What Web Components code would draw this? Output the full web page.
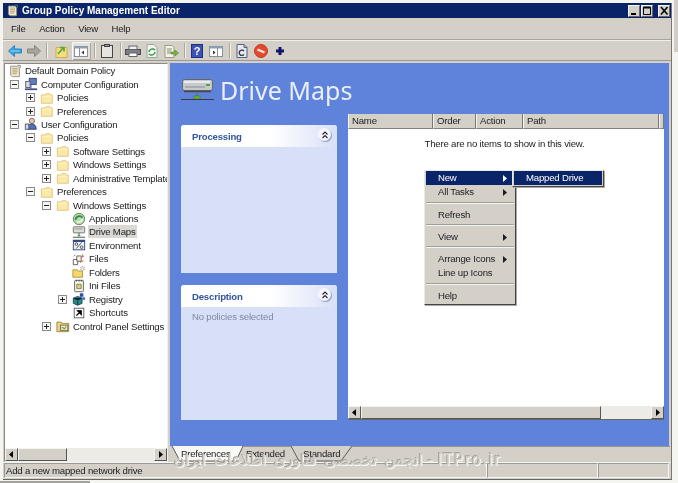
<!DOCTYPE html>
<html>
<head>
<meta charset="utf-8">
<title>Group Policy Management Editor</title>
<style>
html, body { margin: 0; height: 100%; overflow: hidden; }
/* the window behind this one only shows as a strip on the right and a line at the bottom */
body { background:
    linear-gradient(#d0cdc6, #d0cdc6) right 0 top 0 / 4px 52px no-repeat,
    linear-gradient(#a2a19c, #a2a19c) left 0 bottom 0 / 90px 2px no-repeat,
    #f4f4f1;
  font: 9.6px "Liberation Sans", Arial, sans-serif; letter-spacing: -.2px; color: #1c1c20; }
</style>
</head>
<body>
<gp-window>
  <gp-titlebar slot="title">Group Policy Management Editor</gp-titlebar>
  <gp-menubar slot="menu"></gp-menubar>
  <gp-toolbar slot="tools"></gp-toolbar>
  <gp-tree slot="tree"></gp-tree>
  <gp-content slot="content"></gp-content>
  <gp-tabs slot="tabs"></gp-tabs>
  <gp-status slot="status">Add a new mapped network drive</gp-status>
</gp-window>

<script>
// small 16x16 icons, shared by the title bar and the tree
const ICONS = {
  folder: `<path d="M1.500 4.500h4.500l1-1.500h4l1 1.500h2v9.500h-12.500z" fill="#fbe9a8" stroke="#dfc477"/><path d="M2.500 6h10.500" stroke="#fff6cf"/>`,
  doc: `<path d="M3 2.500h8l2 2v10h-8l-2-2z" fill="#f1e8cc" stroke="#8d8a7c"/><path d="M5 5h6M5 7h6M5 9h6M5 11h5" stroke="#a59a78"/><path d="M11 1.500h3v3" fill="none" stroke="#777"/>`,
  computer: `<rect x="6" y="1.500" width="8" height="7" fill="#5c7fc4" stroke="#34406a"/><rect x="2" y="5" width="5" height="7" fill="#d8d8e4" stroke="#50506c"/><path d="M1 14h14" stroke="#40508c" stroke-width="2"/><path d="M8 8.500v5" stroke="#40508c"/>`,
  user: `<circle cx="9" cy="4.500" r="3" fill="#f0c9a0" stroke="#6e6060"/><path d="M4 14c0-4 2-6 5-6s5 2 5 6z" fill="#4f72b8" stroke="#2e3f74"/><rect x="1.500" y="8" width="4" height="6" fill="#d8d8e4" stroke="#50506c"/>`,
  apps: `<circle cx="8" cy="8" r="6.500" fill="#b6dcb0" stroke="#5f7d5e"/><path d="M4 9a4.500 4.500 0 0 1 8-2.500" fill="none" stroke="#2f8a3b" stroke-width="2"/><path d="M12 8a4.500 4.500 0 0 1-6 3" fill="none" stroke="#e8f4e6" stroke-width="2"/>`,
  drive: `<rect x="1.500" y="2" width="13" height="7" rx="1" fill="#dcdcd8" stroke="#6b6b68"/><path d="M3 4.500h9" stroke="#8a8a86"/><path d="M8 9v3" stroke="#555"/><rect x="6.500" y="11" width="3" height="2" fill="#5aa83e"/><path d="M1 14h14" stroke="#444"/>`,
  env: `<rect x="1.500" y="2.500" width="13" height="11" fill="#eef1fa" stroke="#2c3a78"/><path d="M1.500 3.500h13" stroke="#2c3a78" stroke-width="2"/><path d="M5 12l6-7" stroke="#444"/><circle cx="5" cy="7" r="1.500" fill="none" stroke="#444"/><circle cx="11" cy="10.500" r="1.500" fill="none" stroke="#444"/>`,
  files: `<path d="M1.500 8.500h5v6h-5z" fill="#fff" stroke="#555"/><path d="M5.500 4.500h5v6h-5z" fill="#fbf6df" stroke="#555"/><path d="M12 1.500l1.500 4-2 1z" fill="#d8483c"/><path d="M9 12l4-2" stroke="#d8483c"/><path d="M2 5l2-2" stroke="#4a7cc0"/>`,
  folders: `<path d="M1 5.500h5l1 1.500h5v7h-11z" fill="#f6d76c" stroke="#b19135"/><path d="M12 1l.7 2 2-.5-1.300 1.500 1.300 1.500-2-.5-.7 2-.7-2-1.800.5 1.100-1.500-1.100-1.500 1.800.5z" fill="#fff" stroke="#8b8b7c" stroke-width=".5"/>`,
  ini: `<rect x="3" y="1.500" width="10" height="13" rx="1" fill="#f8f8f0" stroke="#555"/><path d="M5.500 6h5v5h-5z" fill="#d9d08a" stroke="#807a45"/><path d="M5 1v2M8 1v2M11 1v2" stroke="#444"/>`,
  registry: `<path d="M1.500 7l5-2 5 2v6l-5 2-5-2z" fill="#2b8a86" stroke="#1a4858"/><path d="M6.500 9v6M1.500 7l5 2 5-2" stroke="#0d3040"/><path d="M9 1.500h4v4h-4z" fill="#2a4fa8"/><path d="M12 6h3v3h-3z" fill="#3b6fd0"/>`,
  shortcut: `<rect x="2.500" y="2.500" width="11" height="11" fill="#fff" stroke="#555"/><path d="M5 11l5-5M6.500 5.500h4v4z" stroke="#000" stroke-width="1.500" fill="#000"/>`,
  cpanel: `<path d="M1 3.500h5l1 1.500h7.500v9.500h-13.500z" fill="#eed28a" stroke="#9c8440"/><rect x="5" y="7" width="8.500" height="6" fill="#eee9c8" stroke="#6e6a4a"/><path d="M6.500 10h2l1 1.500 2-3" fill="none" stroke="#357a38"/>`
};
const svg = (name, size = 16) =>
  `<svg width="${size}" height="${size}" viewBox="0 0 16 16" style="display:block">${ICONS[name]}</svg>`;

const define = (tag, css, html, init) => {
  customElements.define(tag, class extends HTMLElement {
    constructor() {
      super();
      this.attachShadow({ mode: "open" }).innerHTML = `<style>${css}</style>${html}`;
      if (init) init(this.shadowRoot, this);
    }
  });
};

define("gp-window", `
  :host { display: block; box-sizing: border-box; margin: 3px 0 0 3px; width: 669px; height: 477px;
    background: #d4d0c8; border-right: 1px solid #777; border-bottom: 1px solid #666; position: relative; filter: blur(.3px); }
  .frame { display: flex; flex-direction: column; height: 100%; }
  .main { flex: 1; min-height: 0; display: flex; gap: 2px; padding: 2px 2px 0 1px; }
  .right { flex: 1; min-width: 0; display: flex; flex-direction: column; }
  .mark { position: absolute; left: 171px; top: 448px; white-space: nowrap; pointer-events: none;
    font: 15px "DejaVu Sans", sans-serif; letter-spacing: 1.500px; color: #d4d0c8;
    text-shadow: -1px -1px 0 #a5a39b, 1px 1px 0 #f8f8f5; }
  .mark .fa { letter-spacing: 0; word-spacing: 3px; }
`, `
  <div class="frame">
    <slot name="title"></slot>
    <slot name="menu"></slot>
    <slot name="tools"></slot>
    <div class="main">
      <slot name="tree"></slot>
      <div class="right">
        <slot name="content"></slot>
        <slot name="tabs"></slot>
      </div>
    </div>
    <slot name="status"></slot>
  </div>
  <div class="mark" dir="ltr"><span class="fa">انجمن تخصصی فناوری اطلاعات ایران</span> - ITPro.ir</div>
`);

define("gp-titlebar", `
  :host { display: flex; align-items: center; height: 15px; flex: none; background: #0a246a; color: #fff;
    font: bold 10px "Liberation Sans", sans-serif; letter-spacing: 0; padding: 0 1px 0 3px; gap: 3px; }
  .t { flex: 1; }
  .b { width: 12px; height: 12px; background: #d4d0c8; box-sizing: border-box;
    border: 1px solid; border-color: #f4f4f0 #666 #666 #f4f4f0; }
  .b svg { display: block; }
  .g { display: flex; gap: 1px; margin-right: 2px; }
`, `
  ${svg("doc", 13)}
  <span class="t"><slot></slot></span>
  <span class="g">
    <span class="b"><svg width="10" height="10"><path d="M2 8h5" stroke="#000" stroke-width="2"/></svg></span>
    <span class="b"><svg width="10" height="10"><path d="M1.500 1.500h7v7h-7z" fill="none" stroke="#000"/><path d="M1.500 1.500h7" stroke="#000" stroke-width="2"/></svg></span>
  </span>
  <span class="b"><svg width="10" height="10"><path d="M2 1l6.500 7.500M8.500 1l-6.500 7.500" stroke="#000" stroke-width="1.600"/></svg></span>
`);

define("gp-menubar", `
  :host { display: flex; align-items: center; height: 22px; flex: none; padding: 0 0 0 8px; gap: 13.500px;
    border-bottom: 1px solid #a9a69e; box-sizing: border-box; }
`, `<span>File</span><span>Action</span><span>View</span><span>Help</span>`);

define("gp-toolbar", `
  :host { display: flex; align-items: center; height: 21px; flex: none; padding: 0 0 0 2px;
    border-top: 1px solid #f0efea; border-bottom: 1px solid #9c9a92; box-sizing: border-box; }
  .i { width: 19px; height: 16px; display: flex; align-items: center; justify-content: center; }
  .s { width: 1px; height: 15px; background: #a9a69e; margin: 0 3px; box-shadow: 1px 0 #f2f1ec; }
  .s.w { margin: 0 5.500px 0 3px; }
  .on { background: #e4e2dc; box-shadow: inset 1px 1px #f8f8f6, inset -1px -1px #a9a69e; height: 18px; }
`, `
  <span class="i"><svg width="16" height="16" viewBox="0 0 16 16"><path d="M1.500 8l6-5.500v3.500h7v4h-7v3.500z" fill="#38a4e2" stroke="#2a86c6"/><path d="M3.500 8h9" stroke="#9ad6f4"/></svg></span>
  <span class="i"><svg width="16" height="16" viewBox="0 0 16 16"><path d="M14.500 8l-6-5.500v3.500h-7v4h7v3.500z" fill="#a6a69e" stroke="#85857c"/></svg></span>
  <span class="s w"></span>
  <span class="i"><svg width="16" height="16" viewBox="0 0 16 16"><path d="M2 4.500h11v10h-11z" fill="#f6dc7c" stroke="#cfae4c"/><path d="M4 11l5-6M10 8.500v-4h-4" fill="none" stroke="#55a83a" stroke-width="1.600"/></svg></span>
  <span class="i on"><svg width="16" height="16" viewBox="0 0 16 16"><rect x="1.500" y="3.500" width="13" height="10" fill="#fff" stroke="#8a9098"/><path d="M1.500 4.500h13" stroke="#8fa0b6" stroke-width="2"/><path d="M6.500 5v8" stroke="#8a9098"/><path d="M11 7.500l-2.500 2 2.500 2z" fill="#333"/></svg></span>
  <span class="s"></span>
  <span class="i"><svg width="16" height="16" viewBox="0 0 16 16"><rect x="2.500" y="2.500" width="11" height="12" fill="#e6e4de" stroke="#444"/><rect x="5.500" y="1.500" width="5" height="2" fill="#999" stroke="#444"/></svg></span>
  <span class="s"></span>
  <span class="i"><svg width="16" height="16" viewBox="0 0 16 16"><rect x=".5" y="6.500" width="15" height="5" fill="#7e7e86" stroke="#4a4a50"/><rect x="4" y="3" width="8" height="3.500" fill="#eee" stroke="#666"/><rect x="4" y="10" width="8" height="3.500" fill="#fff" stroke="#666"/></svg></span>
  <span class="i"><svg width="16" height="16" viewBox="0 0 16 16"><path d="M3 1.500h7l3 3v10h-10z" fill="#f0f4ee" stroke="#9aa69a"/><path d="M5 9a3.500 3.500 0 0 1 6-2M11 9a3.500 3.500 0 0 1-6 2" fill="none" stroke="#3a9a46" stroke-width="1.500"/></svg></span>
  <span class="i"><svg width="16" height="16" viewBox="0 0 16 16"><path d="M2 2.500h7l2 2v10h-9z" fill="#f4f2e0" stroke="#9a9a84"/><path d="M4 6h5M4 8h4M4 10h4" stroke="#888"/><path d="M8 9h4v-2l3.500 3-3.500 3v-2h-4z" fill="#76b83e" stroke="#4a8a28" stroke-width=".6"/></svg></span>
  <span class="s"></span>
  <span class="i"><svg width="16" height="16" viewBox="0 0 16 16"><rect x="2.500" y="1.500" width="11" height="13" fill="#3a52b4" stroke="#1e2e80"/><text x="8" y="12" font-family="Liberation Sans" font-size="11" font-weight="bold" text-anchor="middle" fill="#fff">?</text></svg></span>
  <span class="i"><svg width="16" height="16" viewBox="0 0 16 16"><rect x="1.500" y="3.500" width="13" height="10" fill="#fff" stroke="#8a9098"/><path d="M1.500 4.500h13" stroke="#8fa0b6" stroke-width="2"/><path d="M9.500 5v8" stroke="#8a9098"/><path d="M5 7.500l2.500 2-2.500 2z" fill="#333"/></svg></span>
  <span class="s"></span>
  <span class="i"><svg width="16" height="16" viewBox="0 0 16 16"><path d="M3 1.500h7l3 3v10h-10z" fill="#e4e8f2" stroke="#5a6078"/><path d="M10 1.500v3h3" fill="none" stroke="#5a6078"/><path d="M10 8a2.700 2.700 0 1 0 0 3.500" fill="none" stroke="#334" stroke-width="1.300"/></svg></span>
  <span class="i"><svg width="16" height="16" viewBox="0 0 16 16"><circle cx="8" cy="8" r="6.500" fill="#e2492f" stroke="#c83a22"/><path d="M4.500 6.500l7 3" stroke="#fbe4de" stroke-width="2.400"/></svg></span>
  <span class="i"><svg width="16" height="16" viewBox="0 0 16 16"><path d="M8 4v8M4 8h8" stroke="#14146e" stroke-width="3"/></svg></span>
`);

// tree data: level, expander (+, - or empty), icon, label
const TREE = [
  [0, "", "doc", "Default Domain Policy"],
  [0, "-", "computer", "Computer Configuration"],
  [1, "+", "folder", "Policies"],
  [1, "+", "folder", "Preferences"],
  [0, "-", "user", "User Configuration"],
  [1, "-", "folder", "Policies"],
  [2, "+", "folder", "Software Settings"],
  [2, "+", "folder", "Windows Settings"],
  [2, "+", "folder", "Administrative Templates"],
  [1, "-", "folder", "Preferences"],
  [2, "-", "folder", "Windows Settings"],
  [3, "", "apps", "Applications"],
  [3, "", "drive", "Drive Maps", true],
  [3, "", "env", "Environment"],
  [3, "", "files", "Files"],
  [3, "", "folders", "Folders"],
  [3, "", "ini", "Ini Files"],
  [3, "+", "registry", "Registry"],
  [3, "", "shortcut", "Shortcuts"],
  [2, "+", "cpanel", "Control Panel Settings"]
];

define("gp-tree-row", `
  :host { display: flex; align-items: center; height: 13.450px; white-space: nowrap; }
  .x { width: 9px; height: 9px; box-sizing: border-box; border: 1px solid #8a8a8a; background: #f6f6f2; flex: none; visibility: hidden; margin-right: 5px; }
  .x svg { display: block; }
  .ic { flex: none; width: 14px; margin-right: 2px; height: 13px; display: flex; align-items: center; justify-content: center; }
  .lb { padding: 0 1px; line-height: 13px; }
  :host([selected]) .lb { background: #d9d8d3; }
`, `<span class="x"></span><span class="ic"></span><span class="lb"></span>`);

define("gp-tree", `
  :host { display: flex; flex-direction: column; width: 164px; flex: none; box-sizing: border-box;
    background: #fff; border: 1px solid; border-color: #8a8880 #eee #eee #8a8880; overflow: hidden; }
  .rows { flex: 1; min-height: 0; overflow: hidden; }
  gp-tree-row { margin-left: var(--in); }
  gp-scrollbar { flex: none; }
`, `<div class="rows"></div><gp-scrollbar thumb-width="49"></gp-scrollbar>`, (root) => {
  const rows = root.querySelector(".rows");
  for (const [level, exp, icon, label, sel] of TREE) {
    const row = document.createElement("gp-tree-row");
    // the first row has no expander column at all
    const top = exp === "" && level === 0;
    row.style.setProperty("--in", (top ? 3 : 5 + level * 16) + "px");
    const s = row.shadowRoot;
    const x = s.querySelector(".x");
    if (exp) {
      x.style.visibility = "visible";
      x.innerHTML = `<svg width="7" height="7"><path d="M1 3.500h5${exp === "+" ? "M3.500 1v5" : ""}" stroke="#222"/></svg>`;
    }
    if (top) x.style.display = "none";
    s.querySelector(".ic").innerHTML = svg(icon, 14);
    s.querySelector(".lb").textContent = label;
    if (sel) row.setAttribute("selected", "");
    rows.append(row);
  }
});

define("gp-scrollbar", `
  :host { display: flex; height: 13px; align-items: stretch; background: #ecebe6; }
  .b { width: 13px; flex: none; box-sizing: border-box; background: #d4d0c8; border: 1px solid;
    border-color: #f4f4f0 #555 #555 #f4f4f0; display: flex; align-items: center; justify-content: center; }
  .track { flex: 1; min-width: 0; display: flex; }
  .thumb { box-sizing: border-box; background: #d4d0c8; border: 1px solid; border-color: #f4f4f0 #555 #555 #f4f4f0; }
`, `
  <span class="b"><svg width="5" height="7"><path d="M4 0v7L0 3.500z" fill="#000"/></svg></span>
  <span class="track"><span class="thumb"></span></span>
  <span class="b"><svg width="5" height="7"><path d="M1 0v7l4-3.500z" fill="#000"/></svg></span>
`, (root, el) => {
  // attributes are read once the parser or the parent has set them
  queueMicrotask(() => {
    root.querySelector(".thumb").style.flex = `0 0 ${el.getAttribute("thumb-width") || 50}px`;
  });
});

define("gp-tasks", `
  :host { display: flex; flex-direction: column; box-sizing: border-box; background: #d8e0f7; border-radius: 3px 3px 0 0; }
  .head { height: 22px; flex: none; display: flex; justify-content: space-between; padding: 0 6px 0 11px;
    background: linear-gradient(90deg, #fff 58%, #d8e0f7); color: #32549c; font-weight: bold; border-radius: 3px 3px 0 0; line-height: 24px; }
  .up { width: 13px; height: 13px; margin-top: 3px; border-radius: 50%; background: #f4f6fc; box-shadow: 1px 1px 1px #8d9ab8; display: flex; align-items: center; justify-content: center; }
  .body { flex: 1; padding: 4px 11px; color: #8288a0; }
`, `
  <div class="head"><span><slot name="title"></slot></span>
    <span class="up"><svg width="8" height="8"><path d="M1.500 3.500l2.500-2.500 2.500 2.500M1.500 7l2.500-2.500 2.500 2.500" fill="none" stroke="#223" stroke-width="1.100"/></svg></span></div>
  <div class="body"><slot></slot></div>
`);

customElements.define("gp-menu", class extends HTMLElement {
  constructor() {
    super();
    this.attachShadow({ mode: "open" }).innerHTML = `<style>
      :host { display: block; box-sizing: border-box; background: #d4d0c8; padding: 0 1px 1px; border: 1px solid;
        border-color: #e8e8e4 #444 #444 #e8e8e4; box-shadow: 1px 1px 0 #aaa; white-space: nowrap; }
      .it { height: 14.300px; line-height: 14.300px; padding: 0 7px 0 12px; display: flex; justify-content: space-between; align-items: center; }
      .it.on { background: #0a246a; color: #fff; }
      .sep { height: 2px; margin: 2px 0 4px; background: #a09e96; border-bottom: 1px solid #f4f4f0; box-sizing: border-box; }
      svg { fill: currentColor; }
    </style>`;
  }
  set items(list) {
    for (const it of list) {
      const d = document.createElement("div");
      if (!it) { d.className = "sep"; this.shadowRoot.append(d); continue; }
      d.className = it[2] ? "it on" : "it";
      d.innerHTML = `<span>${it[0]}</span>` + (it[1] ? `<svg width="4" height="7"><path d="M0 0v7l4-3.500z"/></svg>` : "");
      this.shadowRoot.append(d);
    }
  }
});

define("gp-listview", `
  :host { display: flex; flex-direction: column; background: #fff; box-sizing: border-box; position: relative; border-bottom: 1px solid #666; }
  .cols { display: flex; height: 15px; background: #d4d0c8; flex: none; }
  .cols span { box-sizing: border-box; border-right: 1px solid #777; border-left: 1px solid #f4f4f0; border-bottom: 1px solid #808080; padding-left: 3px; line-height: 14px; }
  .empty { flex: 1; text-align: center; padding-top: 9px; min-height: 0; margin-right: 3px; }
  gp-menu { position: absolute; left: 76px; top: 56px; width: 92px; }
  .sub { left: 164px; width: 92px; }
`, `
  <div class="cols">
    <span style="width:85px">Name</span><span style="width:43px">Order</span><span style="width:47px">Action</span><span style="width:136px">Path</span><span style="flex:1"></span>
  </div>
  <div class="empty">There are no items to show in this view.</div>
  <gp-scrollbar thumb-width="240"></gp-scrollbar>
  <gp-menu id="ctx"></gp-menu>
  <gp-menu class="sub" id="sub"></gp-menu>
`, (root) => {
  root.getElementById("ctx").items = [
    ["New", true, true], ["All Tasks", true], 0, ["Refresh"], 0, ["View", true], 0,
    ["Arrange Icons", true], ["Line up Icons"], 0, ["Help"]
  ];
  root.getElementById("sub").items = [["Mapped Drive", false, true]];
});

define("gp-content", `
  :host { display: flex; flex-direction: column; flex: 1; min-height: 0; background: #5f82da; padding: 0 7px 0 11px; box-sizing: border-box; }
  .title { height: 49px; flex: none; display: flex; align-items: center; gap: 6px; padding-top: 5px; box-sizing: border-box;
    color: #e9effc; font: 25px "Noto Sans", sans-serif; letter-spacing: 0; }
  .cols { flex: 1; min-height: 0; display: grid; grid-template-columns: 156px 1fr; gap: 11px; padding-bottom: 26px; }
  .left { display: grid; grid-template-rows: 148px 135px; row-gap: 12px; padding-top: 13px; }
  gp-listview { margin-top: 2px; }
`, `
  <div class="title">
    <svg width="33" height="24" viewBox="0 0 33 24" style="display:block">
      <rect x="1.500" y="1.500" width="30" height="11" rx="2" fill="#c6cacc" stroke="#63666a"/>
      <path d="M3 4h26" stroke="#f4f6f6" stroke-width="1.500"/><path d="M4 9h20" stroke="#8c9094"/>
      <rect x="25" y="6" width="4" height="2" fill="#56a63a"/><path d="M3 13.500h27" stroke="#45484c" stroke-width="1.500"/>
      <path d="M16 14v5" stroke="#666"/><rect x="13" y="18" width="6" height="3" fill="#6ab23c" stroke="#3f7a24" stroke-width=".6"/>
      <path d="M0 21.500h33" stroke="#3a3c44"/>
    </svg>
    <span>Drive Maps</span>
  </div>
  <div class="cols">
    <div class="left">
      <gp-tasks><span slot="title">Processing</span></gp-tasks>
      <gp-tasks><span slot="title">Description</span>No policies selected</gp-tasks>
    </div>
    <gp-listview></gp-listview>
  </div>
`);

define("gp-tabs", `
  :host { display: flex; height: 16px; flex: none; padding-left: 11px; position: relative; box-sizing: border-box; }
  svg { position: absolute; left: 0; top: 0; }
  span { position: relative; line-height: 16px; }
`, `
  <svg width="500" height="16">
    <path d="M2 0L10 15H66L73 0z" fill="#f8f8f5"/>
    <path d="M2 0L10 15H66L73 0H121L129 15H171L182 0H500" fill="none" stroke="#5c5c58"/>
  </svg>
  <span style="width:65px">Preferences</span><span style="width:57px">Extended</span><span>Standard</span>
`);

define("gp-status", `
  :host { display: flex; height: 17px; flex: none; box-sizing: border-box; border-top: 1px solid #f4f4f0; padding: 0 2px 1px 1px; }
  .c { box-sizing: border-box; border: 1px solid; border-color: #9c9a92 #f4f4f0 #f4f4f0 #9c9a92; line-height: 13px; padding-left: 1px; }
`, `<span class="c" style="flex:1"><slot></slot></span><span class="c" style="width:111px"></span><span class="c" style="width:71px"></span>`);
</script>
</body>
</html>
